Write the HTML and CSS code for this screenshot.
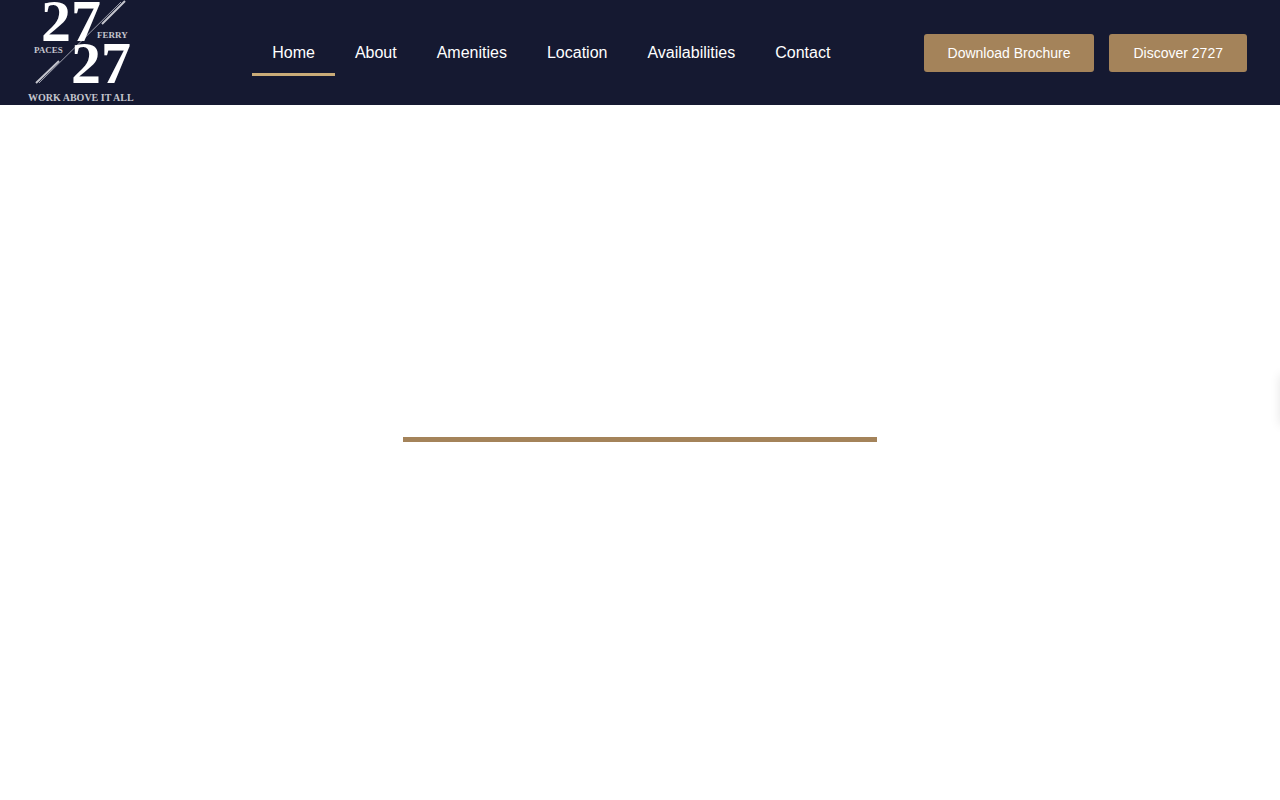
FILE: index.html
```html
<!DOCTYPE html>
<html lang="en">
  <head>
    <meta charset="UTF-8">
    <title>2727 Paces Ferry</title>
    <meta name="viewport" content="width=device-width, initial-scale=1">
    <link rel="stylesheet" href="styles.css">
  </head>
  <body>
    <header class="site-header">
      <a class="logo" href="#" aria-label="2727 Paces Ferry">
        <svg width="125" height="105" viewBox="20 0 125 105">
          <!-- slashes -->
          <g class="logo-slash">
            <path d="M39 83L121 2"/>
            <path class="thick" d="M36 83L59 61M102 24L125 1"/>
          </g>
          <g class="logo-number">
            <text x="41" y="41">27</text>
            <text x="71" y="83">27</text>
          </g>
          <g class="logo-name">
            <text x="34" y="53">PACES</text>
            <text x="97" y="38">FERRY</text>
            <text class="tagline" x="28" y="101">WORK ABOVE IT ALL</text>
          </g>
        </svg>
      </a>
      <nav class="main-nav">
        <a class="nav-link active" href="#">Home</a>
        <a class="nav-link" href="#about">About</a>
        <a class="nav-link" href="#amenities">Amenities</a>
        <a class="nav-link" href="#location">Location</a>
        <a class="nav-link" href="#availabilities">Availabilities</a>
        <a class="nav-link" href="#contact">Contact</a>
      </nav>
      <div class="header-buttons">
        <button class="btn" type="button">Download Brochure</button>
        <button class="btn" type="button">Discover 2727</button>
      </div>
    </header>
    <main class="hero">
      <hr class="hero-line">
    </main>
    <!-- side tab, parked just past the right edge -->
    <div class="side-tab"></div>
  </body>
</html>
```
FILE: styles.css
```css
:root {
  --navy: #151931;
  --gold: #a4835a;
  --gold-light: #c9ab78;
}
* { box-sizing: border-box; }
body {
  margin: 0;
  background-color: #fff;
  font-family: "Liberation Sans", Arial, sans-serif;
  overflow-x: hidden;
}
.site-header {
  display: flex;
  align-items: center;
  justify-content: space-between;
  height: 105px;
  padding-right: 33px;
  background-color: var(--navy);
}
.logo {
  width: 179px;
  height: 105px;
  padding-left: 20px;
}
.logo svg { display: block; }
.logo-number {
  fill: #fff;
  font-family: "Liberation Serif", "Times New Roman", serif;
  font-size: 60px;
  font-weight: bold;
}
.logo-name {
  fill: #c4c5cd;
  font-family: "Liberation Serif", "Times New Roman", serif;
  font-size: 9px;
  font-weight: bold;
}
.logo-name .tagline { font-size: 10px; }
.logo-slash {
  fill: none;
  stroke: #9c9eab;
  stroke-width: 1;
}
.logo-slash .thick {
  stroke: #c4c5cd;
  stroke-width: 2;
}
.main-nav { display: flex; }
.nav-link {
  padding: 13px 20px 10px;
  border-bottom: 3px solid transparent;
  color: #fff;
  font-size: 16px;
  line-height: 20px;
  text-decoration: none;
}
.nav-link.active { border-bottom-color: var(--gold-light); }
.header-buttons {
  display: flex;
  gap: 15px;
}
.btn {
  height: 38px;
  padding: 0 24px;
  border: 0;
  border-radius: 3px;
  background-color: var(--gold);
  color: #fff;
  font-family: inherit;
  font-size: 14px;
  cursor: pointer;
}
.hero { padding-top: 332px; }
.hero-line {
  width: 37%;
  height: 5px;
  margin: 0 auto;
  border: 0;
  background-color: var(--gold);
}
.side-tab {
  position: fixed;
  top: 375px;
  left: 100%;
  width: 50px;
  height: 50px;
  box-shadow: 0 0 10px rgba(0, 0, 0, 0.1);
}
```
